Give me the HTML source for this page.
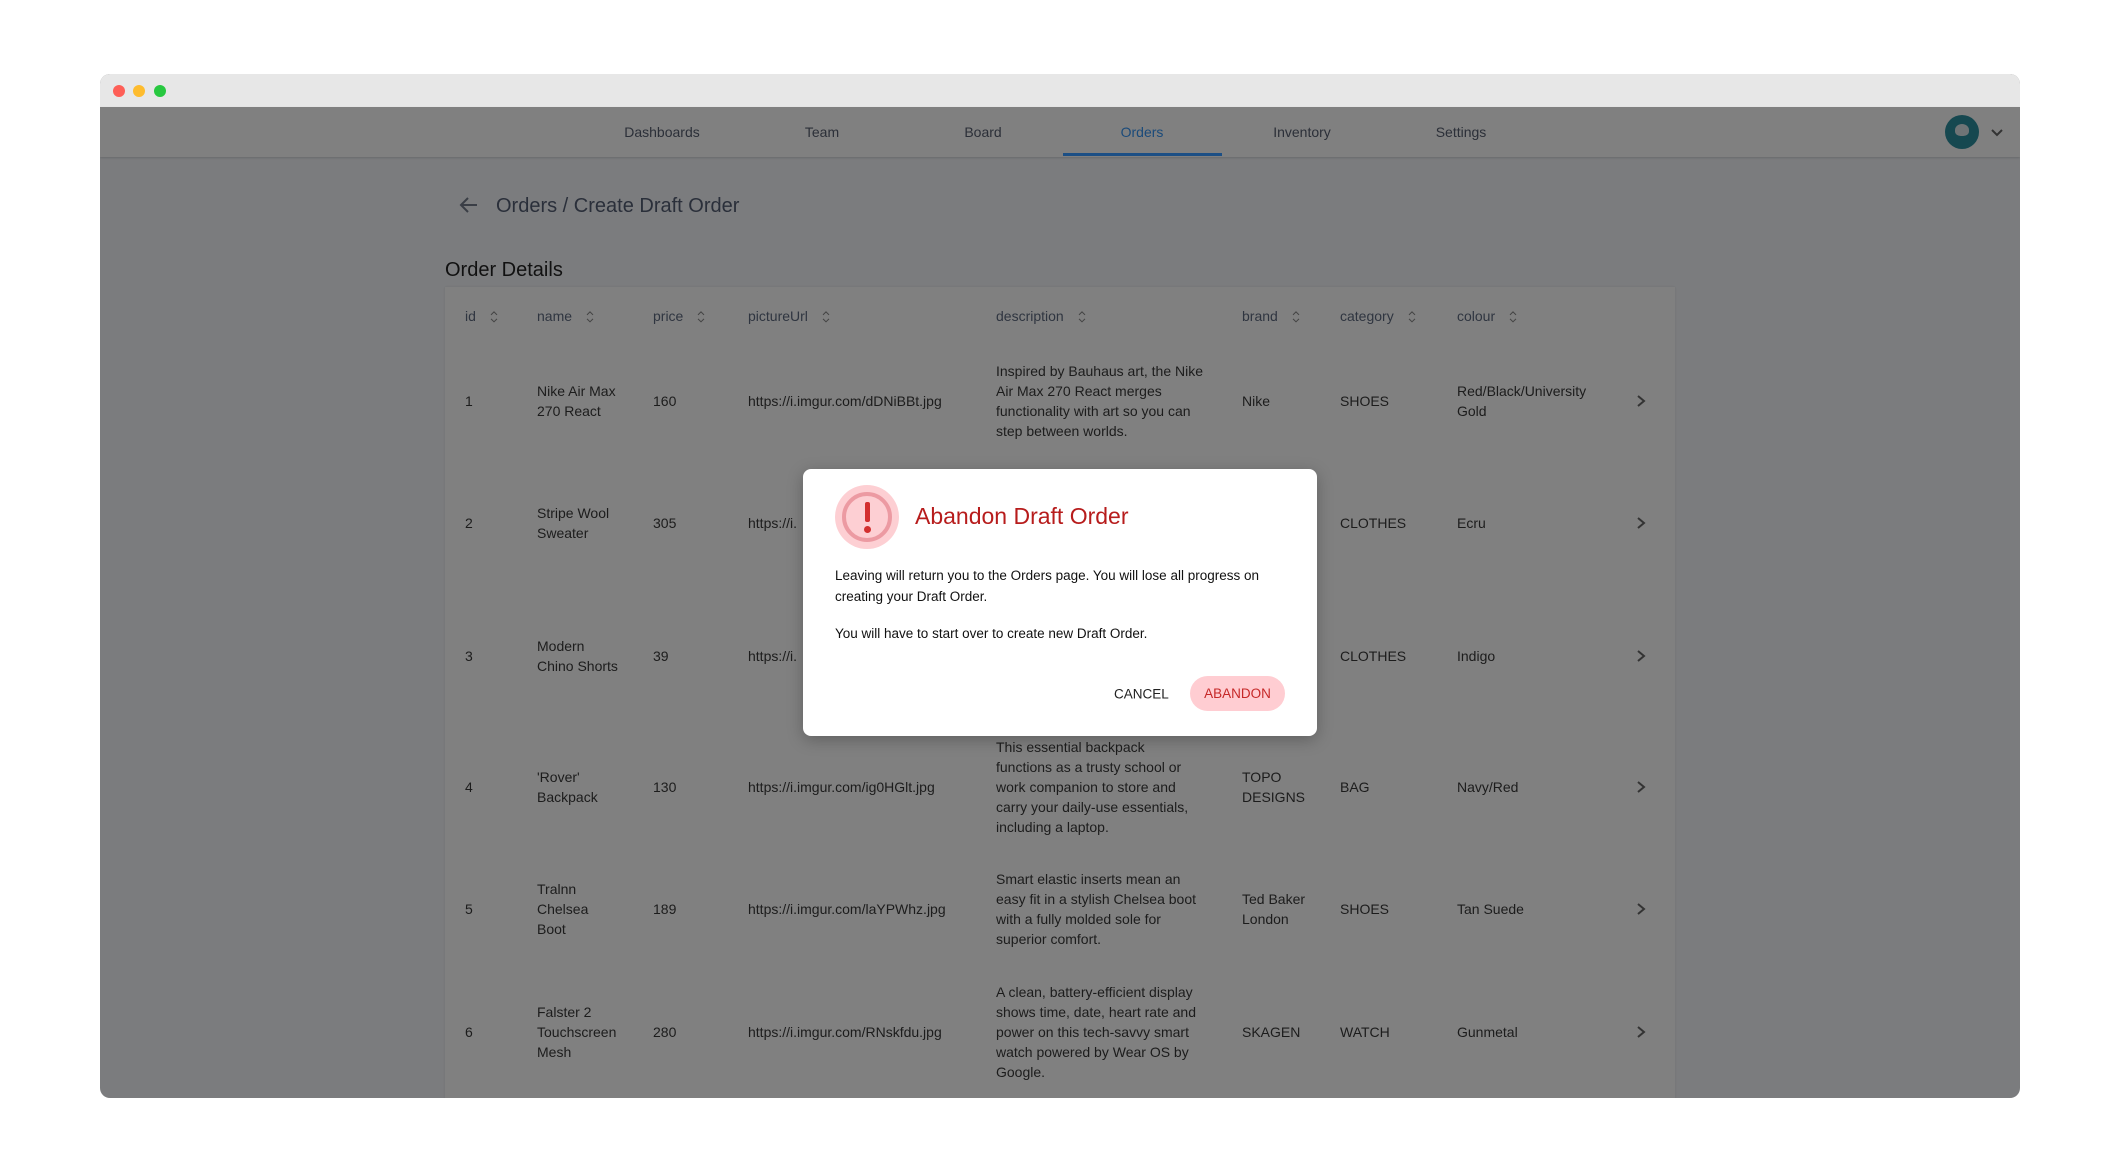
<!DOCTYPE html>
<html><head><meta charset="utf-8">
<style>
*{margin:0;padding:0;box-sizing:border-box}
body{width:2120px;height:1173px;background:#fff;position:relative;overflow:hidden;font-family:"Liberation Sans",sans-serif;color:#1c1c1c}
.win{position:absolute;left:100px;top:74px;width:1920px;height:1024px;border-radius:10px;overflow:hidden;background:#7b7c7e}
.tb{position:absolute;left:0;top:0;width:1920px;height:33px;background:#e7e7e7}
.dot{position:absolute;top:11px;width:12px;height:12px;border-radius:50%}
.nav{position:absolute;left:0;top:33px;width:1920px;height:50px;background:#808080;box-shadow:0 1px 2px rgba(0,0,0,.15)}
.ni{position:absolute;top:25px;transform:translate(-50%,-50%);font-size:14px;color:#2b2f38;white-space:nowrap}
.t{position:absolute;font-size:14px;line-height:20px;white-space:nowrap;transform:translateY(-50%)}
.h{position:absolute;font-size:14px;color:#2f3540;white-space:nowrap;transform:translateY(-50%)}
.h svg{vertical-align:middle;margin-left:14px}
.chev{position:absolute;transform:translate(-50%,-50%)}
</style></head><body>
<div class="win">
 <div class="tb">
  <div class="dot" style="left:13px;background:#fe5f57"></div>
  <div class="dot" style="left:33px;background:#febc2e"></div>
  <div class="dot" style="left:54px;background:#28c840"></div>
 </div>
 <div class="nav">
  <div class="ni" style="left:562px">Dashboards</div>
  <div class="ni" style="left:722px">Team</div>
  <div class="ni" style="left:883px">Board</div>
  <div class="ni" style="left:1042px;color:#1a4a7a">Orders</div>
  <div class="ni" style="left:1202px">Inventory</div>
  <div class="ni" style="left:1361px">Settings</div>
  <div style="position:absolute;left:963px;top:46px;width:159px;height:3px;background:#1c4f85"></div>
  <div style="position:absolute;left:1845px;top:8px;width:34px;height:34px;border-radius:50%;background:#164850"></div>
  <div style="position:absolute;left:1855px;top:17px;width:14px;height:12px;border-radius:50% 50% 40% 40%;background:#6f7476"></div>
  <svg style="position:absolute;left:1890px;top:21px" width="14" height="10"><path d="M2 2 L7 7 L12 2" stroke="#333" stroke-width="2" fill="none"/></svg>
 </div>
 <svg style="position:absolute;left:359px;top:122px" width="20" height="18"><path d="M18 9 H3 M9 2 L2 9 L9 16" stroke="#3a3e46" stroke-width="2" fill="none"/></svg>
 <div style="position:absolute;left:396px;top:121px;font-size:20px;color:#2a2f3a">Orders / Create Draft Order</div>
 <div style="position:absolute;left:345px;top:185px;font-size:20px;color:#111">Order Details</div>
 <div style="position:absolute;left:345px;top:213px;width:1230px;height:830px;background:#808080;box-shadow:0 0 2px rgba(0,0,0,.1)">
 </div>
</div>
<div id="tbl" style="position:absolute;left:0;top:0">
 <div class="h" style="left:465px;top:316px">id<svg width="8" height="14"><path d="M1 5 L4 2 L7 5 M1 9 L4 12 L7 9" stroke="#444" fill="none"/></svg></div>
 <div class="h" style="left:537px;top:316px">name<svg width="8" height="14"><path d="M1 5 L4 2 L7 5 M1 9 L4 12 L7 9" stroke="#444" fill="none"/></svg></div>
 <div class="h" style="left:653px;top:316px">price<svg width="8" height="14"><path d="M1 5 L4 2 L7 5 M1 9 L4 12 L7 9" stroke="#444" fill="none"/></svg></div>
 <div class="h" style="left:748px;top:316px">pictureUrl<svg width="8" height="14"><path d="M1 5 L4 2 L7 5 M1 9 L4 12 L7 9" stroke="#444" fill="none"/></svg></div>
 <div class="h" style="left:996px;top:316px">description<svg width="8" height="14"><path d="M1 5 L4 2 L7 5 M1 9 L4 12 L7 9" stroke="#444" fill="none"/></svg></div>
 <div class="h" style="left:1242px;top:316px">brand<svg width="8" height="14"><path d="M1 5 L4 2 L7 5 M1 9 L4 12 L7 9" stroke="#444" fill="none"/></svg></div>
 <div class="h" style="left:1340px;top:316px">category<svg width="8" height="14"><path d="M1 5 L4 2 L7 5 M1 9 L4 12 L7 9" stroke="#444" fill="none"/></svg></div>
 <div class="h" style="left:1457px;top:316px">colour<svg width="8" height="14"><path d="M1 5 L4 2 L7 5 M1 9 L4 12 L7 9" stroke="#444" fill="none"/></svg></div>

 <div class="t" style="left:465px;top:401px">1</div>
 <div class="t" style="left:537px;top:401px">Nike Air Max<br>270 React</div>
 <div class="t" style="left:653px;top:401px">160</div>
 <div class="t" style="left:748px;top:401px">https://i.imgur.com/dDNiBBt.jpg</div>
 <div class="t" style="left:996px;top:401px">Inspired by Bauhaus art, the Nike<br>Air Max 270 React merges<br>functionality with art so you can<br>step between worlds.</div>
 <div class="t" style="left:1242px;top:401px">Nike</div>
 <div class="t" style="left:1340px;top:401px">SHOES</div>
 <div class="t" style="left:1457px;top:401px">Red/Black/University<br>Gold</div>

 <div class="t" style="left:465px;top:523px">2</div>
 <div class="t" style="left:537px;top:523px">Stripe Wool<br>Sweater</div>
 <div class="t" style="left:653px;top:523px">305</div>
 <div class="t" style="left:748px;top:523px">https://i.</div>
 <div class="t" style="left:1340px;top:523px">CLOTHES</div>
 <div class="t" style="left:1457px;top:523px">Ecru</div>

 <div class="t" style="left:465px;top:656px">3</div>
 <div class="t" style="left:537px;top:656px">Modern<br>Chino Shorts</div>
 <div class="t" style="left:653px;top:656px">39</div>
 <div class="t" style="left:748px;top:656px">https://i.</div>
 <div class="t" style="left:1340px;top:656px">CLOTHES</div>
 <div class="t" style="left:1457px;top:656px">Indigo</div>

 <div class="t" style="left:465px;top:787px">4</div>
 <div class="t" style="left:537px;top:787px">'Rover'<br>Backpack</div>
 <div class="t" style="left:653px;top:787px">130</div>
 <div class="t" style="left:748px;top:787px">https://i.imgur.com/ig0HGlt.jpg</div>
 <div class="t" style="left:996px;top:787px">This essential backpack<br>functions as a trusty school or<br>work companion to store and<br>carry your daily-use essentials,<br>including a laptop.</div>
 <div class="t" style="left:1242px;top:787px">TOPO<br>DESIGNS</div>
 <div class="t" style="left:1340px;top:787px">BAG</div>
 <div class="t" style="left:1457px;top:787px">Navy/Red</div>

 <div class="t" style="left:465px;top:909px">5</div>
 <div class="t" style="left:537px;top:909px">Tralnn<br>Chelsea<br>Boot</div>
 <div class="t" style="left:653px;top:909px">189</div>
 <div class="t" style="left:748px;top:909px">https://i.imgur.com/laYPWhz.jpg</div>
 <div class="t" style="left:996px;top:909px">Smart elastic inserts mean an<br>easy fit in a stylish Chelsea boot<br>with a fully molded sole for<br>superior comfort.</div>
 <div class="t" style="left:1242px;top:909px">Ted Baker<br>London</div>
 <div class="t" style="left:1340px;top:909px">SHOES</div>
 <div class="t" style="left:1457px;top:909px">Tan Suede</div>

 <div class="t" style="left:465px;top:1032px">6</div>
 <div class="t" style="left:537px;top:1032px">Falster 2<br>Touchscreen<br>Mesh</div>
 <div class="t" style="left:653px;top:1032px">280</div>
 <div class="t" style="left:748px;top:1032px">https://i.imgur.com/RNskfdu.jpg</div>
 <div class="t" style="left:996px;top:1032px">A clean, battery-efficient display<br>shows time, date, heart rate and<br>power on this tech-savvy smart<br>watch powered by Wear OS by<br>Google.</div>
 <div class="t" style="left:1242px;top:1032px">SKAGEN</div>
 <div class="t" style="left:1340px;top:1032px">WATCH</div>
 <div class="t" style="left:1457px;top:1032px">Gunmetal</div>

 <svg class="chev" style="left:1641px;top:401px" width="10" height="14"><path d="M2 2 L8 7 L2 12" stroke="#333" stroke-width="2" fill="none"/></svg>
 <svg class="chev" style="left:1641px;top:523px" width="10" height="14"><path d="M2 2 L8 7 L2 12" stroke="#333" stroke-width="2" fill="none"/></svg>
 <svg class="chev" style="left:1641px;top:656px" width="10" height="14"><path d="M2 2 L8 7 L2 12" stroke="#333" stroke-width="2" fill="none"/></svg>
 <svg class="chev" style="left:1641px;top:787px" width="10" height="14"><path d="M2 2 L8 7 L2 12" stroke="#333" stroke-width="2" fill="none"/></svg>
 <svg class="chev" style="left:1641px;top:909px" width="10" height="14"><path d="M2 2 L8 7 L2 12" stroke="#333" stroke-width="2" fill="none"/></svg>
 <svg class="chev" style="left:1641px;top:1032px" width="10" height="14"><path d="M2 2 L8 7 L2 12" stroke="#333" stroke-width="2" fill="none"/></svg>
</div>

<div style="position:absolute;left:803px;top:469px;width:514px;height:267px;background:#fff;border-radius:8px;box-shadow:0 4px 16px rgba(0,0,0,.25)">
 <div style="position:absolute;left:32px;top:16px;width:64px;height:64px;border-radius:50%;background:#fdcfd3"></div>
 <div style="position:absolute;left:39px;top:23px;width:50px;height:50px;border-radius:50%;border:4px solid #ec9aa2"></div>
 <div style="position:absolute;left:62px;top:33px;width:5px;height:20px;border-radius:2px;background:#d32f2f"></div>
 <div style="position:absolute;left:61px;top:57px;width:7px;height:7px;border-radius:50%;background:#d32f2f"></div>
 <div style="position:absolute;left:112px;top:34px;font-size:23px;color:#b71c1c">Abandon Draft Order</div>
 <div style="position:absolute;left:32px;top:96px;font-size:13.5px;line-height:21px;color:#111">Leaving will return you to the Orders page. You will lose all progress on<br>creating your Draft Order.</div>
 <div style="position:absolute;left:32px;top:154px;font-size:13.5px;line-height:21px;color:#111">You will have to start over to create new Draft Order.</div>
 <div style="position:absolute;left:311px;top:225px;font-size:13.5px;color:#222;transform:translateY(-50%)">CANCEL</div>
 <div style="position:absolute;left:387px;top:207px;width:95px;height:35px;border-radius:18px;background:#ffcdd2;color:#c62828;font-size:13.5px;text-align:center;line-height:35px">ABANDON</div>
</div>
</body></html>
